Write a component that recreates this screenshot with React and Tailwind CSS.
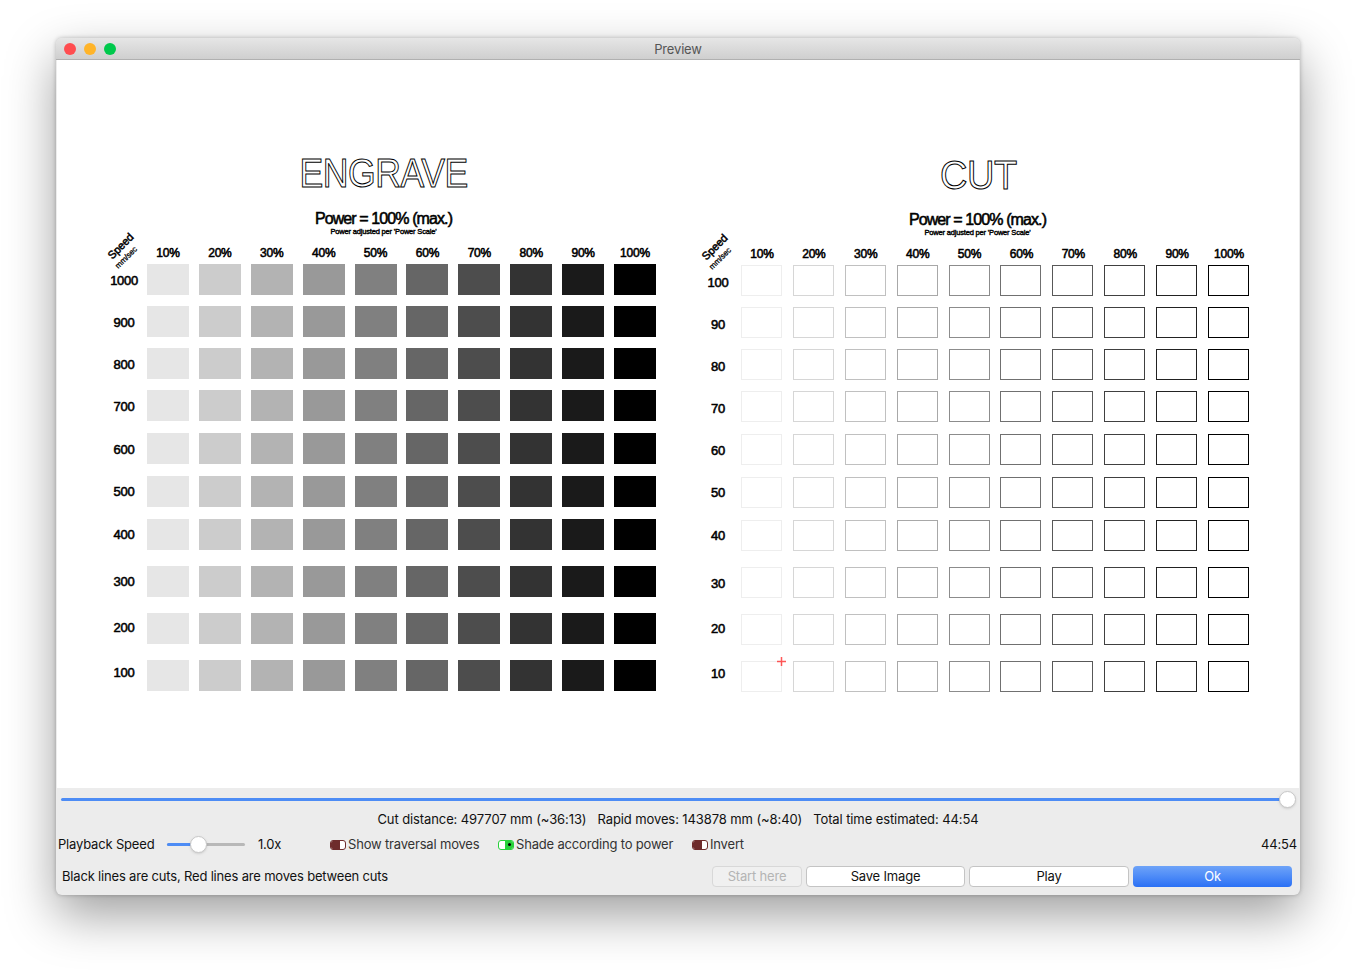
import React from "react";

const powers = ["10%", "20%", "30%", "40%", "50%", "60%", "70%", "80%", "90%", "100%"];

const engraveFills = ["bg-[#e6e6e6]", "bg-[#cccccc]", "bg-[#b3b3b3]", "bg-[#999999]", "bg-[#808080]", "bg-[#666666]", "bg-[#4d4d4d]", "bg-[#333333]", "bg-[#1a1a1a]", "bg-[#000000]"];
const cutBorders = ["border-[#eeeeee]", "border-[#d6d6d6]", "border-[#c0c0c0]", "border-[#a8a8a8]", "border-[#8c8c8c]", "border-[#707070]", "border-[#585858]", "border-[#404040]", "border-[#222222]", "border-[#000000]"];

// row gaps are uneven in the picture, so each row carries its own margin
const rowGaps = ["mt-0", "mt-[11px]", "mt-[11px]", "mt-[11px]", "mt-[12px]", "mt-[12px]", "mt-[12px]", "mt-[16px]", "mt-[16px]", "mt-[16px]"];
const engraveSpeeds = [1000, 900, 800, 700, 600, 500, 400, 300, 200, 100];
const cutSpeeds = [100, 90, 80, 70, 60, 50, 40, 30, 20, 10];
// the speed labels drift against their rows
const engraveLabelShift = ["mt-[2px]", "mt-[2px]", "mt-[2px]", "mt-[2px]", "mt-[2px]", "mt-0", "mt-0", "mt-0", "-mt-[2px]", "-mt-[6px]"];
const cutLabelShift = ["mt-[3px]", "mt-[3px]", "mt-[3px]", "mt-[4px]", "mt-[2px]", "mt-0", "mt-0", "mt-[2px]", "-mt-[2px]", "-mt-[6px]"];

const strokeLabel = "[-webkit-text-stroke:0.55px_black] text-black font-['Liberation_Sans',sans-serif]";

function Panel({ title, titleClass, speeds, labelShift, engrave }) {
    return (
        <div className="flex flex-col w-[600px] shrink-0">
            <div className="pl-[55px] flex justify-center">
                <div className={`text-[40px] leading-[46px] text-transparent [-webkit-text-stroke:1px_black] tracking-[-0.5px] font-['Liberation_Sans',sans-serif] ${titleClass}`}>
                    {title}
                </div>
            </div>
            <div className={`pl-[55px] mt-[14px] text-center text-[16px] leading-[18px] tracking-[-0.9px] ${strokeLabel}`}>
                Power = 100% (max.)
            </div>
            <div className="pl-[55px] text-center text-[7.5px] leading-[9px] -mt-[1px] [-webkit-text-stroke:0.4px_black] text-black font-['Liberation_Sans',sans-serif]">
                Power adjusted per 'Power Scale'
            </div>
            <div className="relative flex gap-[9.9px] pl-[91px] mt-[9px] h-[19px]">
                <div className="absolute left-[49px] top-[-5px] -rotate-45 text-[11px] leading-[12px] [-webkit-text-stroke:0.5px_black] text-black font-['Liberation_Sans',sans-serif]">Speed</div>
                <div className="absolute left-[57px] top-[9px] -rotate-45 text-[8px] leading-[8px] [-webkit-text-stroke:0.3px_black] text-black font-['Liberation_Sans',sans-serif]">mm/sec</div>
                {powers.map((p) => (
                    <div key={p} className={`w-[42px] text-center text-[12px] leading-[14px] mt-[1px] tracking-[-0.2px] ${strokeLabel}`}>
                        {p}
                    </div>
                ))}
            </div>
            {speeds.map((speed, r) => (
                <div key={speed} className={`flex items-center ${rowGaps[r]}`}>
                    <div className={`w-[91px] pl-[45px] text-center text-[13px] leading-[15px] tracking-[-0.3px] ${labelShift[r]} ${strokeLabel}`}>
                        {speed}
                    </div>
                    <div className="flex gap-[9.9px]">
                        {powers.map((p, c) => (
                            <div
                                key={p}
                                className={engrave ? `relative w-[42px] h-[31px] ${engraveFills[c]}` : `relative w-[41px] mr-[1px] h-[31px] border ${cutBorders[c]}`}
                            >
                                {!engrave && r === 9 && c === 0 && (
                                    <svg className="absolute -right-[5px] -top-[5px]" width="9" height="9" viewBox="0 0 9 9">
                                        <path d="M4.5 0V9M0 4.5H9" stroke="#ff2020" strokeWidth="1.5" strokeOpacity="0.75" />
                                    </svg>
                                )}
                            </div>
                        ))}
                    </div>
                </div>
            ))}
        </div>
    );
}

function Toggle({ on }) {
    if (on) {
        return (
            <div className="flex w-[16px] h-[10px] rounded-[3px] border border-[#27d13a] bg-white overflow-hidden">
                <div className="w-[6px]" />
                <div className="flex-1 bg-[#27d13a] flex items-center justify-center">
                    <div className="w-[3px] h-[3px] rounded-full bg-black" />
                </div>
            </div>
        );
    }
    return (
        <div className="flex w-[16px] h-[10px] rounded-[3px] border border-[#6e2c2c] bg-white overflow-hidden">
            <div className="w-[9px] bg-[#6e2c2c]" />
        </div>
    );
}

function Button({ children, className }) {
    return (
        <div className={`flex items-center justify-center h-[21px] pt-[1px] rounded-[4px] ${className}`}>
            {children}
        </div>
    );
}

export default function App() {
    return (
        <div className="h-[970px] w-[1356px] bg-white pt-[38px] pl-[56px] overflow-hidden font-['Inter',sans-serif] text-[13px] tracking-[-0.18px] text-[#111111]">
            <div className="w-[1244px] h-[857px] rounded-[6px] overflow-hidden flex flex-col shadow-[0_20px_50px_rgba(0,0,0,0.38),0_0_4px_rgba(0,0,0,0.25)] bg-[#ececec]">
                {/* title bar */}
                <div className="relative h-[22px] shrink-0 flex items-center justify-center bg-gradient-to-b from-[#e6e6e6] to-[#cfcfcf] border-b border-[#b0b0b0]">
                    <div className="absolute left-[8px] top-[5px] flex gap-[8px]">
                        <div className="w-[12px] h-[12px] rounded-full bg-[#ff4d50]" />
                        <div className="w-[12px] h-[12px] rounded-full bg-[#ffb429]" />
                        <div className="w-[12px] h-[12px] rounded-full bg-[#00c94c]" />
                    </div>
                    <span className="text-[#555555] leading-none pt-[1px]">Preview</span>
                </div>

                {/* canvas */}
                <div className="h-[728px] shrink-0 mx-[1px] bg-white flex pt-[90px]">
                    <div className="-ml-[1px]">
                        <Panel title="ENGRAVE" titleClass="scale-x-[0.89]" speeds={engraveSpeeds} labelShift={engraveLabelShift} engrave />
                    </div>
                    <div className="-ml-[6px] mt-[1px]">
                        <Panel title="CUT" titleClass="scale-x-[0.95] mt-[1px] -mb-[1px] ml-[2px]" speeds={cutSpeeds} labelShift={cutLabelShift} />
                    </div>
                </div>

                {/* controls */}
                <div className="flex-1 flex flex-col">
                    <div className="relative h-[3px] mt-[9.5px] ml-[5px] mr-[13px] rounded-full bg-[#4d8cf5]">
                        <div className="absolute -right-[9px] -top-[7px] w-[17px] h-[17px] rounded-full bg-white border border-[#c8c8c8] shadow-sm" />
                    </div>
                    <div className="flex justify-center gap-[11px] mt-[9px] leading-[18px] tracking-[-0.1px]">
                        <span>Cut distance: 497707 mm (~36:13)</span>
                        <span>Rapid moves: 143878 mm (~8:40)</span>
                        <span>Total time estimated: 44:54</span>
                    </div>
                    <div className="flex items-center mt-[8px] h-[18px] pl-[2px] pr-[3px]">
                        <span className="w-[109px]">Playback Speed</span>
                        <div className="relative w-[78px] h-[3px] rounded-full bg-[#b8b8b8]">
                            <div className="w-[24px] h-[3px] rounded-full bg-[#4d8cf5]" />
                            <div className="absolute left-[23px] -top-[7px] w-[17px] h-[17px] rounded-full bg-white border border-[#c8c8c8] shadow-sm" />
                        </div>
                        <span className="ml-[13px] w-[72px]">1.0x</span>
                        <Toggle />
                        <span className="ml-[2px] w-[150px] text-[#333333]">Show traversal moves</span>
                        <Toggle on />
                        <span className="ml-[2px] w-[176px] text-[#333333]">Shade according to power</span>
                        <Toggle />
                        <span className="ml-[2px] text-[#333333]">Invert</span>
                        <span className="ml-auto">44:54</span>
                    </div>
                    <div className="flex items-center mt-[12px] pl-[6px] pr-[8px]">
                        <span className="pt-[1px]">Black lines are cuts, Red lines are moves between cuts</span>
                        <div className="ml-auto flex gap-[4px]">
                            <Button className="w-[90px] bg-[#f0f0f0] border border-[#d8d8d8] text-[#b4b4b4]">Start here</Button>
                            <Button className="w-[159px] bg-white border border-[#c4c4c4]">Save Image</Button>
                            <Button className="w-[160px] bg-white border border-[#c4c4c4]">Play</Button>
                            <Button className="w-[159px] bg-gradient-to-b from-[#6ea3f8] to-[#2a70f5] text-white">Ok</Button>
                        </div>
                    </div>
                </div>
            </div>
        </div>
    );
}
